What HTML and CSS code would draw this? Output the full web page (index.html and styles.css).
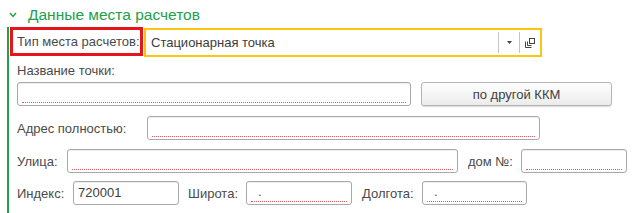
FILE: index.html
```html
<!DOCTYPE html>
<html lang="ru">

<head>
  <meta charset="UTF-8" />
  <title>Данные места расчетов</title>
  <link rel="stylesheet" href="styles.css">
</head>

<body>
  <div class="group">
    <div class="group-title">
      <svg class="chevron" width="8" height="6" viewBox="0 0 8 6">
        <path d="M1 1 L4 4.4 L7 1" fill="none" stroke="#22a04b" stroke-width="1.5" />
      </svg>
      <span>Данные места расчетов</span>
    </div>

    <div class="group-body">
      <div class="row row-type">
        <div class="label label-marked">Тип места расчетов:</div>
        <div class="select">
          <span class="select-text">Стационарная точка</span>
          <span class="select-btn">
            <svg width="5" height="3" viewBox="0 0 5 3">
              <path d="M0 0 H5 L2.5 3 Z" fill="#444" />
            </svg>
          </span>
          <span class="select-btn">
            <svg width="10" height="10" viewBox="0 0 10 10">
              <rect x="4.5" y="0.5" width="5" height="5" fill="none" stroke="#444" />
              <path d="M0.5 3.5 V9.5 H6.5" fill="none" stroke="#444" />
              <path d="M2.5 3.5 V7.5 H6.5" fill="none" stroke="#444" />
            </svg>
          </span>
        </div>
      </div>

      <div class="label label-top">Название точки:</div>
      <div class="row">
        <div class="field field-name req"><span class="field-line"></span></div>
        <button class="btn">по другой ККМ</button>
      </div>

      <div class="row row-address">
        <div class="label label-address">Адрес полностью:</div>
        <div class="field field-address req"><span class="field-line"></span></div>
      </div>

      <div class="row row-street">
        <div class="label label-street">Улица:</div>
        <div class="field field-street req"><span class="field-line"></span></div>
        <div class="label label-house">дом №:</div>
        <div class="field field-small req"><span class="field-line"></span></div>
      </div>

      <div class="row row-index">
        <div class="label label-index">Индекс:</div>
        <div class="field field-small"><span class="field-value">720001</span></div>
        <div class="label label-lat">Широта:</div>
        <div class="field field-small req"><span class="field-line field-num">.</span></div>
        <div class="label label-lon">Долгота:</div>
        <div class="field field-lon req"><span class="field-line field-num">.</span></div>
      </div>
    </div>
  </div>
</body>

</html>
```

FILE: styles.css
```css
body,
html {
  margin: 0;
  padding: 0;
  background: #fff;
  font-family: 'Liberation Sans', Arial, sans-serif;
  font-size: 13px;
  color: #4a4a4a;
}

.group {
  width: 640px;
}

.group-title {
  display: flex;
  align-items: center;
  height: 27px;
  padding-left: 9px;
  color: #22a04b;
  font-size: 15.5px;
  line-height: 20px;
}

.group-title .chevron {
  margin-right: 11px;
  margin-top: 3px;
}

.group-title span {
  margin-top: 2px;
}

.group-body {
  margin-left: 7px;
  border-left: 2px solid #22a04b;
  padding-left: 8px;
  height: 186px;
}

.row {
  display: flex;
  align-items: center;
}

.row-type {
  align-items: flex-start;
}

.label {
  line-height: 15px;
  white-space: nowrap;
}

.label-marked {
  box-sizing: border-box;
  width: 133px;
  height: 29px;
  margin-left: -7px;
  border: 3px solid #e8141c;
  padding-left: 4px;
  line-height: 23px;
}

.select {
  box-sizing: border-box;
  display: flex;
  align-items: stretch;
  width: 398px;
  height: 29px;
  margin-left: 1px;
  margin-top: 1px;
  border: 2px solid #fcc512;
  background: #fff;
}

.select-text {
  flex: 1;
  padding-left: 5px;
  line-height: 25px;
  color: #3c3c3c;
  font-size: 13px;
}

.select-btn {
  display: flex;
  align-items: center;
  justify-content: center;
  width: 20px;
  margin: 2px 0;
  border-left: 1px solid #c4c4c4;
}

.label-top {
  padding-top: 2px;
  line-height: 23px;
}

.field {
  box-sizing: border-box;
  display: flex;
  align-items: flex-end;
  height: 24px;
  border: 1px solid #a9a9a9;
  border-radius: 3px;
  box-shadow: inset 0 1px 1px rgba(0, 0, 0, 0.07);
  padding: 0 4px 2px;
  background: #fff;
}

.field-line {
  flex: 1;
  height: 19px;
  line-height: 19px;
}

.req .field-line {
  border-bottom: 1px dotted #f2555a;
}

.field-num {
  padding-left: 7px;
  color: #555;
}

.field-value {
  align-self: center;
  padding-top: 1px;
  color: #3c3c3c;
}

.field-name {
  width: 394px;
}

.btn {
  box-sizing: border-box;
  width: 191px;
  height: 24px;
  margin-left: 10px;
  border: 1px solid #b5b5b5;
  border-radius: 3px;
  background: linear-gradient(#fefefe, #ececec);
  box-shadow: 0 1px 1px rgba(0, 0, 0, 0.15);
  font-family: inherit;
  font-size: 13px;
  color: #404040;
  padding: 0;
}

.row-address {
  margin-top: 10px;
}

.label-address {
  width: 130px;
}

.field-address {
  width: 393px;
}

.row-street {
  margin-top: 9px;
}

.label-street {
  width: 50px;
}

.field-street {
  width: 391px;
}

.label-house {
  width: 53px;
  margin-left: 10px;
}

.field-small {
  width: 106px;
}

.row-index {
  margin-top: 8px;
}

.label-index {
  width: 56px;
}

.label-lat {
  width: 58px;
  margin-left: 9px;
}

.label-lon {
  width: 60px;
  margin-left: 10px;
}

.field-lon {
  width: 105px;
}
```
